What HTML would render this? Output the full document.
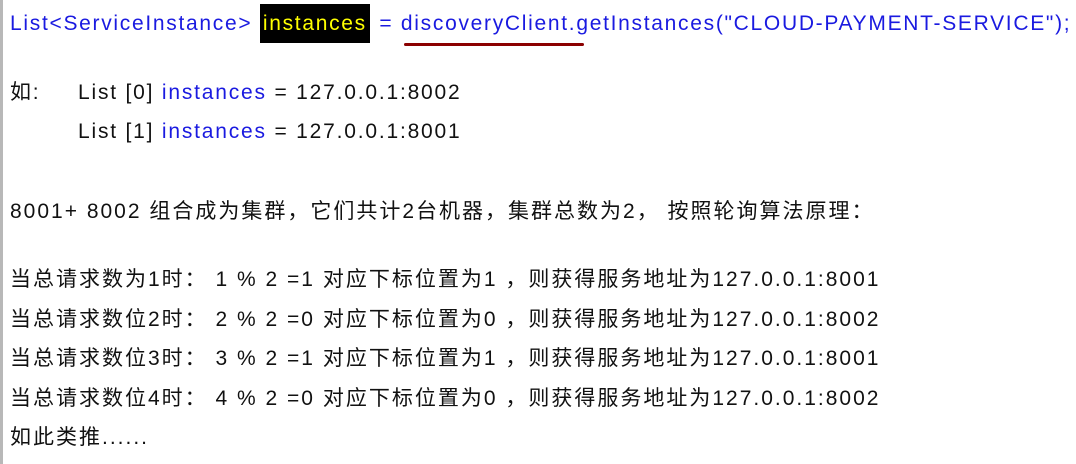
<!DOCTYPE html>
<html><head><meta charset="utf-8"><style>
body{margin:0;width:1076px;height:464px;background:#fff;position:relative;overflow:hidden;font-family:"Liberation Sans","Noto Sans CJK SC",sans-serif;font-size:21px;letter-spacing:1.8px;color:#111}
.bl{position:absolute;left:0;top:0;width:3px;height:464px;background:#b8b8b8}
.l{position:absolute;white-space:nowrap;line-height:24px}
.c{letter-spacing:2px}
.b{color:#1a1ae0}
.hl{background:#000;color:#ffff00;padding:8px 3px 8px;margin-right:2px}
.u{position:absolute;left:404px;top:43px;width:180px;height:3px;background:#8b0000;border-radius:2px}
</style></head><body>
<div class="bl"></div>
<div class="l b" style="left:10px;top:12px;letter-spacing:1.7px">List&lt;ServiceInstance&gt; <span class="hl">instances</span> = discoveryClient.getInstances("CLOUD-PAYMENT-SERVICE");</div>
<div class="u"></div>
<div class="l" style="left:10px;top:81px">如:</div>
<div class="l" style="left:78px;top:81px">List [0] <span class="b">instances</span> = 127.0.0.1:8002</div>
<div class="l" style="left:78px;top:120px">List [1] <span class="b">instances</span> = 127.0.0.1:8001</div>
<div class="l c" style="left:10px;top:200px">8001+ 8002 组合成为集群，它们共计2台机器，集群总数为2， 按照轮询算法原理：</div>
<div class="l c" style="left:10px;top:268px">当总请求数为1时： 1 % 2 =1 对应下标位置为1 ，则获得服务地址为127.0.0.1:8001</div>
<div class="l c" style="left:10px;top:308px">当总请求数位2时： 2 % 2 =0 对应下标位置为0 ，则获得服务地址为127.0.0.1:8002</div>
<div class="l c" style="left:10px;top:347px">当总请求数位3时： 3 % 2 =1 对应下标位置为1 ，则获得服务地址为127.0.0.1:8001</div>
<div class="l c" style="left:10px;top:387px">当总请求数位4时： 4 % 2 =0 对应下标位置为0 ，则获得服务地址为127.0.0.1:8002</div>
<div class="l c" style="left:10px;top:426px">如此类推......</div>
</body></html>
